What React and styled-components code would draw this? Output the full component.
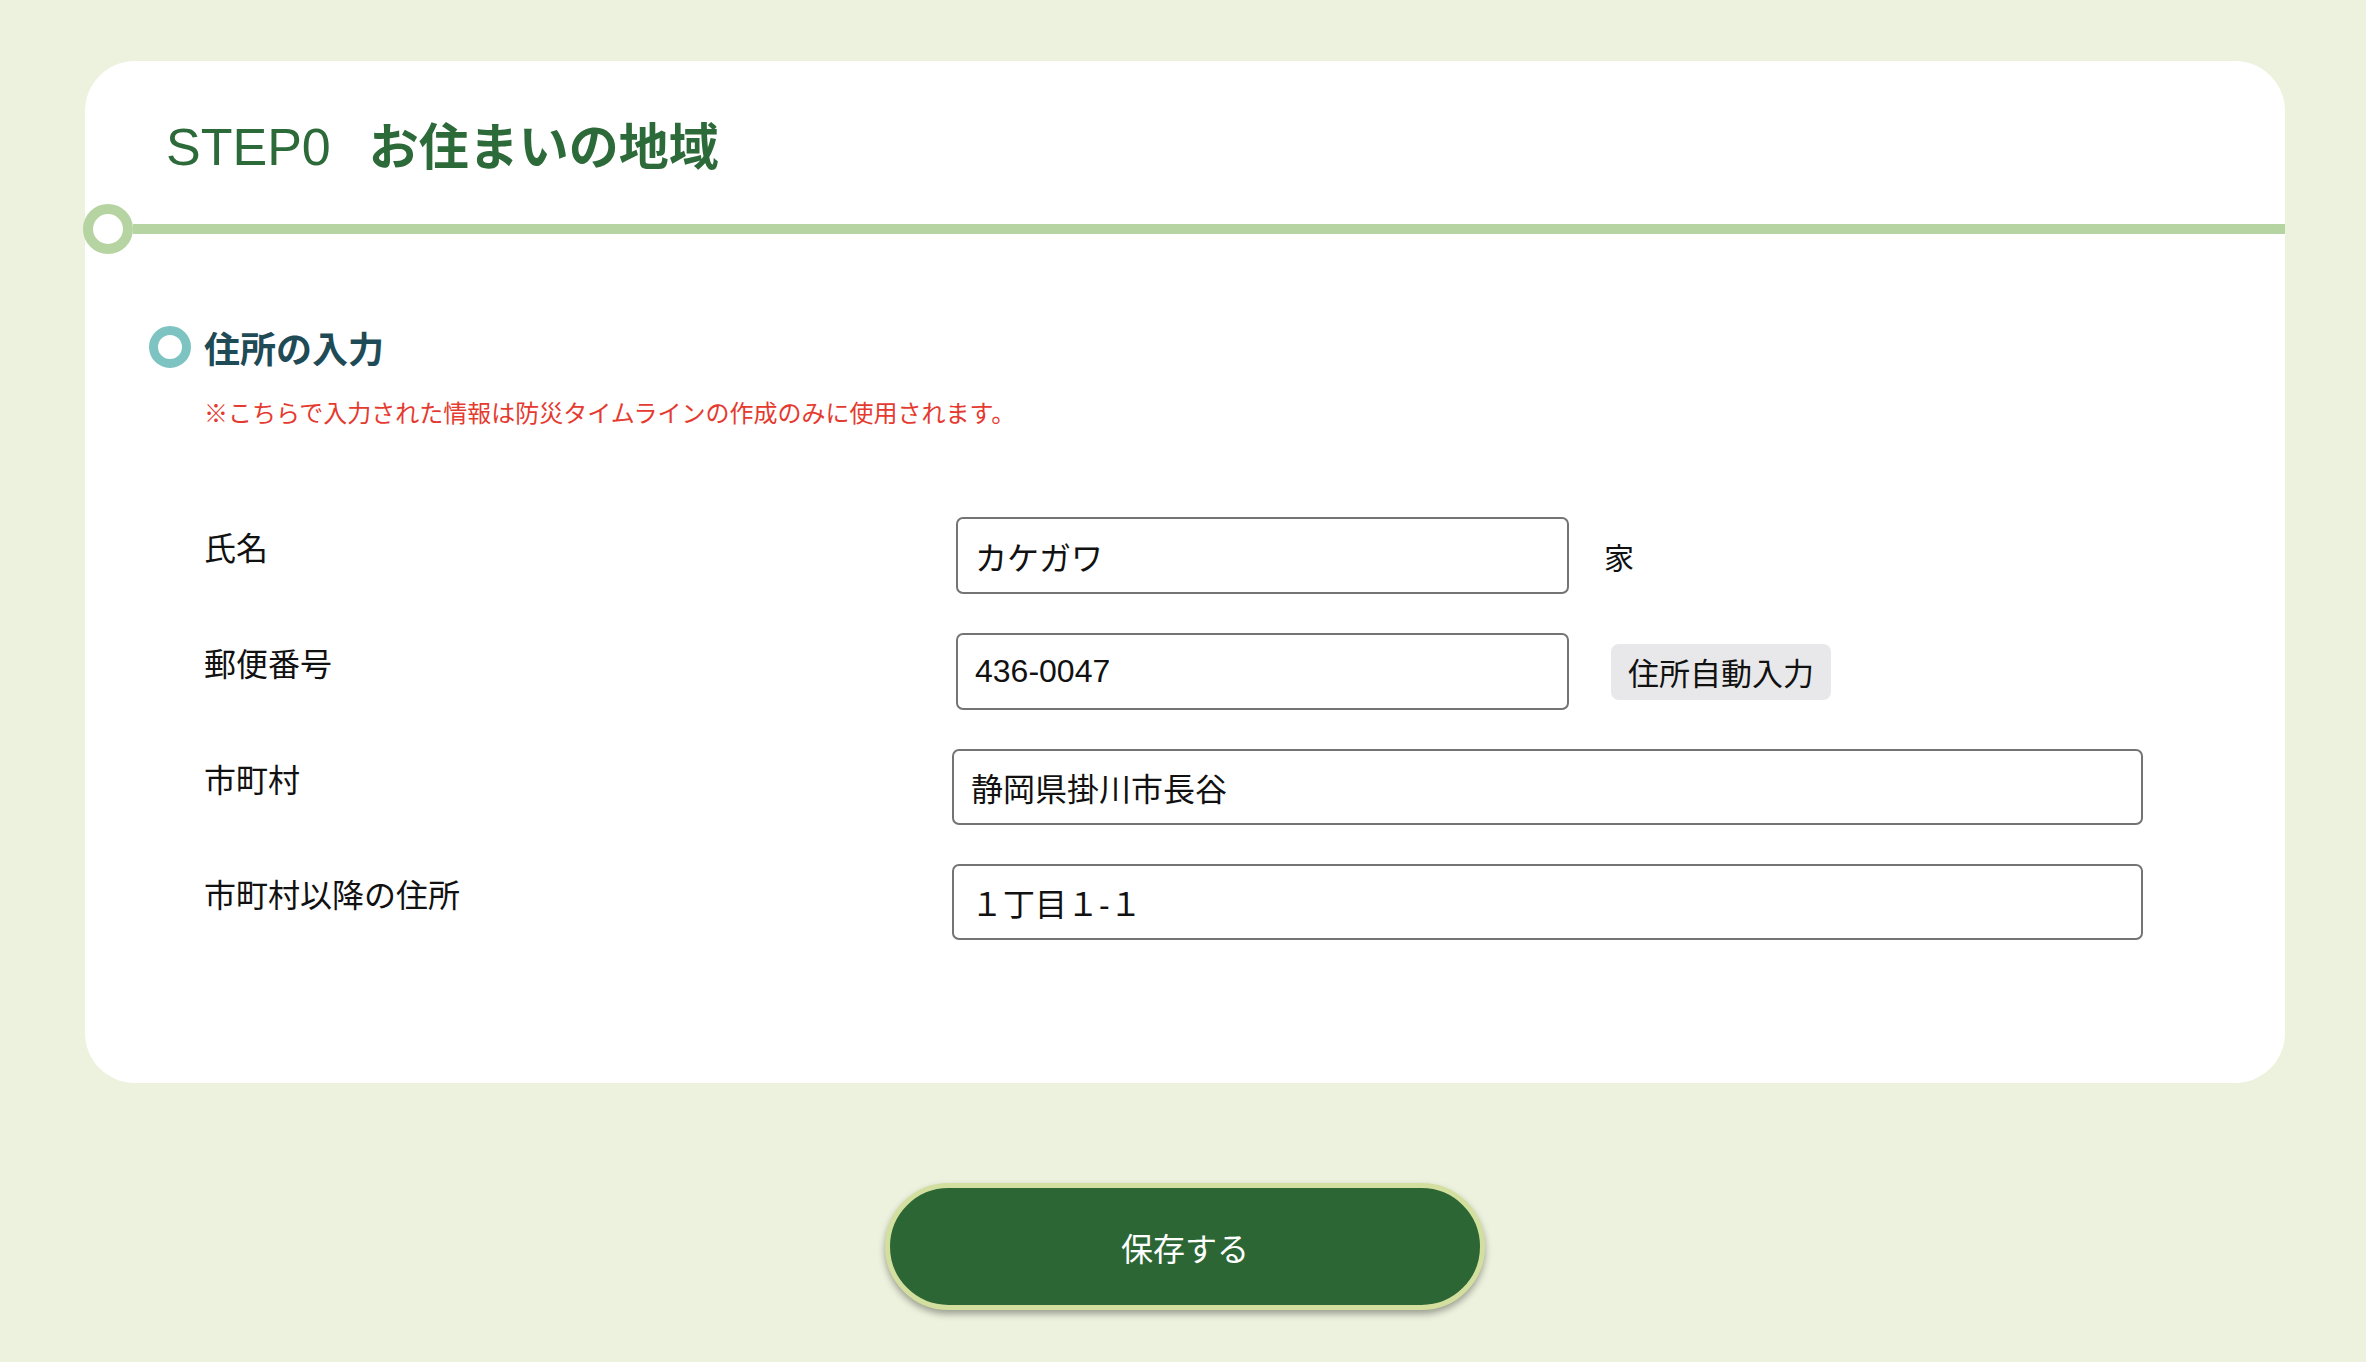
import React from "react";
import styled, { createGlobalStyle } from "styled-components";

const GlobalStyle = createGlobalStyle`
  body {
    margin: 0;
    background: #edf2de;
    font-family: "Liberation Sans", "Noto Sans CJK JP", sans-serif;
    color: #111;
  }
`;

const Page = styled.div`
  padding: 61px 81px 51px 85px;
`;

const Card = styled.section`
  background: #fff;
  border-radius: 50px;
  padding: 52px 0 143px;
`;

const Title = styled.h1`
  margin: 0 0 27px 81px;
  font-size: 52px;
  line-height: 60px;
  font-weight: 400;
  color: #2d6a3a;
  white-space: nowrap;
`;

const TitleMain = styled.span`
  margin-left: 38px;
  font-family: "Noto Sans CJK JP", sans-serif;
  font-size: 50px;
  font-weight: 700;
`;

const StepLine = styled.div`
  display: flex;
  align-items: center;
  margin-left: -2px;
`;

const Ring = styled.span`
  flex: none;
  box-sizing: border-box;
  width: ${(p) => p.$size}px;
  height: ${(p) => p.$size}px;
  border-radius: 50%;
  border: ${(p) => p.$stroke}px solid ${(p) => p.$color};
  background: #fff;
`;

const Rail = styled.span`
  flex: 1;
  height: 10px;
  background: #b5d4a1;
`;

const Section = styled.div`
  padding: 72px 0 0 64px;
`;

const Heading = styled.h2`
  display: flex;
  align-items: center;
  gap: 13px;
  margin: 0;
  font-family: "Noto Sans CJK JP", sans-serif;
  font-size: 36px;
  line-height: 42px;
  font-weight: 700;
  color: #1f4b57;
`;

const Note = styled.p`
  margin: 27px 0 0 55px;
  font-family: "Noto Sans CJK JP", sans-serif;
  font-size: 24px;
  line-height: 34px;
  color: #e53a2f;
`;

const Form = styled.div`
  display: grid;
  grid-template-columns: 752px 1fr;
  row-gap: 39px;
  margin: 88px 0 0 55px;
`;

const Label = styled.div`
  padding-top: 10px;
  font-size: 32px;
  line-height: 44px;
`;

const Field = styled.div`
  display: flex;
  align-items: center;
`;

const TextInput = styled.input`
  box-sizing: border-box;
  width: ${(p) => (p.$wide ? 1191 : 613)}px;
  height: ${(p) => (p.$wide ? 76 : 77)}px;
  margin-left: ${(p) => (p.$wide ? -4 : 0)}px;
  padding: 0 17px;
  border: 2px solid #747474;
  border-radius: 7px;
  background: #fff;
  font-family: "Liberation Sans", "Noto Sans CJK JP", sans-serif;
  font-size: 32px;
  color: #111;
  outline: none;
`;

const Suffix = styled.span`
  margin-left: 35px;
  font-size: 30px;
`;

const GhostButton = styled.button`
  margin-left: 42px;
  height: 56px;
  padding: 0 17px;
  border: none;
  border-radius: 8px;
  background: #e8e8ea;
  font-family: "Noto Sans CJK JP", sans-serif;
  font-size: 31px;
  color: #111;
`;

const Footer = styled.div`
  display: flex;
  justify-content: center;
  padding-top: 100px;
`;

const SaveButton = styled.button`
  box-sizing: border-box;
  width: 600px;
  height: 127px;
  border: 5px solid #d3df9f;
  border-radius: 64px;
  background: #2c6634;
  box-shadow: 0 4px 7px rgba(0, 0, 0, 0.35);
  font-family: "Noto Sans CJK JP", sans-serif;
  font-size: 32px;
  color: #fff;
`;

const rows = [
  { label: "氏名", value: "カケガワ", suffix: "家" },
  { label: "郵便番号", value: "436-0047", action: "住所自動入力" },
  { label: "市町村", value: "静岡県掛川市長谷", wide: true },
  { label: "市町村以降の住所", value: "１丁目１-１", wide: true },
];

export default function App() {
  return (
    <>
      <GlobalStyle />
      <Page>
        <Card>
          <Title>
            STEP0<TitleMain>お住まいの地域</TitleMain>
          </Title>
          <StepLine>
            <Ring $size={50} $stroke={10} $color="#b5d4a1" />
            <Rail />
          </StepLine>
          <Section>
            <Heading>
              <Ring $size={42} $stroke={9} $color="#7dc3c2" />
              住所の入力
            </Heading>
            <Note>※こちらで入力された情報は防災タイムラインの作成のみに使用されます。</Note>
            <Form>
              {rows.map((row) => (
                <React.Fragment key={row.label}>
                  <Label>{row.label}</Label>
                  <Field>
                    <TextInput $wide={row.wide} defaultValue={row.value} />
                    {row.suffix && <Suffix>{row.suffix}</Suffix>}
                    {row.action && <GhostButton>{row.action}</GhostButton>}
                  </Field>
                </React.Fragment>
              ))}
            </Form>
          </Section>
        </Card>
        <Footer>
          <SaveButton>保存する</SaveButton>
        </Footer>
      </Page>
    </>
  );
}
